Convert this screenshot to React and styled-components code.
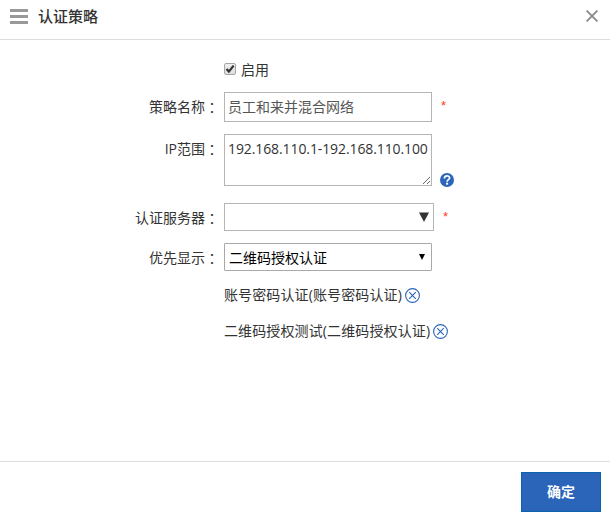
import React, { useState } from 'react';
import styled, { createGlobalStyle } from 'styled-components';

const GlobalStyle = createGlobalStyle`
  * {
    box-sizing: border-box;
  }

  body {
    margin: 0;
    background: #fff;
    color: #333;
    font-family: 'Open Sans', 'Noto Sans CJK SC', sans-serif;
    font-size: 14px;
  }

  input,
  textarea,
  select,
  button {
    font-family: inherit;
    font-size: 14px;
    margin: 0;
    outline: none;
  }
`;

const Dialog = styled.div`
  display: flex;
  flex-direction: column;
  width: 610px;
  height: 517px;
  overflow: hidden;
`;

const Header = styled.header`
  display: flex;
  align-items: center;
  flex: none;
  height: 40px;
  padding: 0 12px 7px 10px;
  border-bottom: 1px solid #ddd;
`;

const MenuIcon = styled.span`
  display: flex;
  flex-direction: column;
  gap: 3px;
  width: 18px;
  margin-right: 10px;

  i {
    height: 3px;
    background: #999;
  }
`;

const Title = styled.h1`
  flex: 1;
  margin: 0;
  font-size: 15px;
  line-height: 20px;
  font-weight: 500;
`;

const IconButton = styled.button`
  display: flex;
  padding: 0;
  border: 0;
  background: none;
  cursor: pointer;
`;

const Form = styled.form`
  display: flex;
  flex-direction: column;
  flex: 1;
  padding-top: 21px;
`;

const Row = styled.div`
  display: flex;
  height: ${(p) => p.$height}px;
  margin-bottom: ${(p) => p.$gap}px;
`;

const Label = styled.label`
  display: flex;
  justify-content: flex-end;
  width: 219px;
  margin-right: 5px;
  line-height: 30px;
`;

const Colon = styled.span`
  width: 14px;
  font-family: 'Noto Sans CJK TC', sans-serif;
`;

const CheckLabel = styled.label`
  display: flex;
  align-items: flex-start;
  gap: 5px;
  height: 20px;
  line-height: 18px;
`;

const Checkbox = styled.span`
  display: flex;
  width: 12px;
  height: 12px;
  margin-top: 2px;
  border: 1px solid #a6a6a6;
  border-radius: 2px;
  background: linear-gradient(#efefef, #dedede);

  svg {
    overflow: visible;
  }
`;

const TextInput = styled.input`
  width: 208px;
  height: 30px;
  padding: 0 3px 2px;
  border: 1px solid #b5b5b5;
  color: #555;
`;

const TextArea = styled.textarea`
  width: 208px;
  height: 52px;
  padding: 4px 3px;
  border: 1px solid #b5b5b5;
  color: #333;
  line-height: 20px;
  letter-spacing: -0.1px;
  white-space: nowrap;
  overflow: hidden;
`;

const ComboBox = styled.div`
  display: flex;
  align-items: center;
  justify-content: flex-end;
  width: 210px;
  height: 28px;
  padding-right: 4px;
  border: 1px solid #b5b5b5;
`;

const SelectBox = styled.div`
  display: grid;
  align-items: center;
  width: 208px;
  height: 28px;

  > * {
    grid-area: 1 / 1;
  }

  svg {
    justify-self: end;
    margin-right: 7px;
    pointer-events: none;
  }
`;

const Select = styled.select`
  width: 100%;
  height: 28px;
  padding: 0 4px;
  appearance: none;
  border: 1px solid #a9a9a9;
  border-radius: 1px;
  background: #fff;
  color: #000;
`;

const Required = styled.span`
  margin-left: 9px;
  padding-top: 6px;
  color: #ff3c14;
  font-family: 'Liberation Sans', sans-serif;
  font-size: 13px;
  line-height: 16px;
`;

const Help = styled.span`
  align-self: flex-end;
  display: flex;
  margin: 0 0 -1px 8px;
`;

const TagRow = styled.div`
  display: flex;
  align-items: center;
  gap: 3px;
  height: 20px;
  margin: 0 0 16px 224px;
`;

const TagText = styled.span`
  padding-bottom: 2px;
  letter-spacing: 0.12px;
`;

const Footer = styled.footer`
  display: flex;
  justify-content: flex-end;
  flex: none;
  height: 56px;
  padding: 10px 9px 0 0;
  border-top: 1px solid #ddd;
`;

const ConfirmButton = styled.button`
  width: 80px;
  height: 40px;
  padding: 0 0 2px;
  border: 1px solid #0d63ac;
  background: #2a65ba;
  color: #fff;
  font-weight: 700;
  cursor: pointer;
`;

const App = () => {
  const [enabled, setEnabled] = useState(true);
  const [tags, setTags] = useState(['账号密码认证(账号密码认证)', '二维码授权测试(二维码授权认证)']);

  return (
    <Dialog>
      <GlobalStyle />
      <Header>
        <MenuIcon><i /><i /><i /></MenuIcon>
        <Title>认证策略</Title>
        <IconButton type="button" aria-label="关闭">
          <svg width="12" height="12" viewBox="0 0 12 12" stroke="#888" strokeWidth="1.8">
            <path d="M.6.6l10.8 10.8M11.4.6L.6 11.4" />
          </svg>
        </IconButton>
      </Header>

      <Form>
        <Row $height={20} $gap={11}>
          <Label />
          <CheckLabel onClick={() => setEnabled(!enabled)}>
            <Checkbox>
              {enabled && (
                <svg width="10" height="10" viewBox="0 0 10 10" fill="none" stroke="#333" strokeWidth="2.3">
                  <path d="M1.5 5l2.4 2.6L8.6 1.6" />
                </svg>
              )}
            </Checkbox>
            启用
          </CheckLabel>
        </Row>

        <Row $height={30} $gap={12}>
          <Label>策略名称<Colon>：</Colon></Label>
          <TextInput defaultValue="员工和来并混合网络" />
          <Required>*</Required>
        </Row>

        <Row $height={52} $gap={17}>
          <Label>IP范围<Colon>：</Colon></Label>
          <TextArea defaultValue="192.168.110.1-192.168.110.100" spellCheck={false} />
          <Help>
            <svg width="14" height="14" viewBox="0 0 14 14">
              <circle cx="7" cy="7" r="7" fill="#2a65ba" />
              <path
                d="M4.4 5.4C4.4 2 9.6 2.1 9.6 4.9c0 1.8-2.5 1.8-2.5 3.8"
                fill="none"
                stroke="#fff"
                strokeWidth="1.7"
              />
              <rect x="6.1" y="9.7" width="2" height="2" fill="#fff" />
            </svg>
          </Help>
        </Row>

        <Row $height={28} $gap={12}>
          <Label>认证服务器<Colon>：</Colon></Label>
          <ComboBox>
            <svg width="10" height="10" viewBox="0 0 10 10">
              <path d="M0 .5h10L5 10z" fill="#333" />
            </svg>
          </ComboBox>
          <Required>*</Required>
        </Row>

        <Row $height={28} $gap={14}>
          <Label>优先显示<Colon>：</Colon></Label>
          <SelectBox>
            <Select>
              <option>二维码授权认证</option>
            </Select>
            <svg width="6" height="6" viewBox="0 0 6 6">
              <path d="M0 0h6L3 6z" fill="#000" />
            </svg>
          </SelectBox>
        </Row>

        {tags.map((tag) => (
          <TagRow key={tag}>
            <TagText>{tag}</TagText>
            <IconButton type="button" aria-label="删除" onClick={() => setTags(tags.filter((t) => t !== tag))}>
              <svg width="15" height="15" viewBox="0 0 15 15" fill="none" stroke="#2a65ba" strokeWidth="1.1">
                <circle cx="7.5" cy="7.5" r="6.9" />
                <path d="M4.2 4.2l6.6 6.6M10.8 4.2l-6.6 6.6" />
              </svg>
            </IconButton>
          </TagRow>
        ))}
      </Form>

      <Footer>
        <ConfirmButton type="button">确定</ConfirmButton>
      </Footer>
    </Dialog>
  );
};

export default App;
